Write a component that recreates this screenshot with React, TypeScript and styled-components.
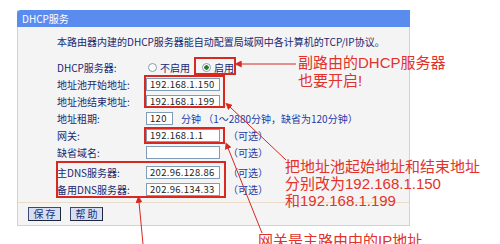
import React from 'react';
import styled, { createGlobalStyle } from 'styled-components';

const GlobalStyle = createGlobalStyle`
  html, body {
    margin: 0;
    padding: 0;
    background: #ffffff;
  }
  body {
    font-family: "Noto Sans CJK SC", "Noto Sans", sans-serif;
  }
`;

interface Field {
  label: string;
  value?: string;
  width?: number;
  suffix?: string;
}

const poolFields: Field[] = [
  { label: '地址池开始地址:', value: '192.168.1.150' },
  { label: '地址池结束地址:', value: '192.168.1.199' },
];

const midFields: Field[] = [
  { label: '地址租期:', value: '120', width: 27, suffix: '分钟 （1～2880分钟，缺省为120分钟）' },
  { label: '网关:', value: '192.168.1.1', suffix: '（可选）' },
  { label: '缺省域名:', value: '', suffix: '（可选）' },
];

const dnsFields: Field[] = [
  { label: '主DNS服务器:', value: '202.96.128.86', suffix: '（可选）' },
  { label: '备用DNS服务器:', value: '202.96.134.33', suffix: '（可选）' },
];

const renderRow = (f: Field) => (
  <Row key={f.label}>
    <Label>{f.label}</Label>
    <Cell>
      <TextBox style={f.width ? { width: f.width } : undefined}>{f.value}</TextBox>
      {f.suffix && <Hint>{f.suffix}</Hint>}
    </Cell>
  </Row>
);

const App: React.FC = () => {
  return (
    <>
      <GlobalStyle />
      <Page>
        <Panel>
          <TitleBar>DHCP服务</TitleBar>
          <Body>
            <Intro>本路由器内建的DHCP服务器能自动配置局域网中各计算机的TCP/IP协议。</Intro>
            <Form>
              <Row>
                <Label>DHCP服务器:</Label>
                <Cell>
                  <Radio>
                    <Dot />
                    不启用
                  </Radio>
                  <Radio>
                    <Dot checked />
                    启用
                  </Radio>
                </Cell>
              </Row>
              {poolFields.map(renderRow)}
              {midFields.map(renderRow)}
              <DnsGroup>{dnsFields.map(renderRow)}</DnsGroup>
            </Form>
          </Body>
          <Footer>
            <Button>保 存</Button>
            <Button>帮 助</Button>
          </Footer>
        </Panel>

        <Marks width="500" height="244" viewBox="0 0 500 244">
          <defs>
            <marker id="tip" viewBox="0 0 10 10" refX="1" refY="5" markerWidth="7" markerHeight="7" orient="auto-start-reverse">
              <path d="M0 0 L10 5 L0 10 z" fill="#d8281f" />
            </marker>
          </defs>
          <g fill="none" stroke="#d8281f" strokeWidth="2">
            <rect x="195" y="58" width="40" height="16" />
            <rect x="145" y="76" width="79" height="31" />
            <rect x="145" y="128" width="79" height="15" />
            <rect x="57" y="162" width="168" height="35" />
          </g>
          <g fill="none" stroke="#d8281f" strokeWidth="1">
            <line x1="296" y1="64" x2="241" y2="64" markerEnd="url(#tip)" />
            <line x1="286" y1="160" x2="230" y2="107" markerEnd="url(#tip)" />
            <line x1="262" y1="233" x2="228" y2="148" markerEnd="url(#tip)" />
            <line x1="143" y1="244" x2="139" y2="202" markerEnd="url(#tip)" />
          </g>
        </Marks>

        <Note style={{ left: 298, top: 54 }}>
          <NoteLine gap={18}>副路由的DHCP服务器</NoteLine>
          <NoteLine gap={18}>也要开启!</NoteLine>
        </Note>
        <Note style={{ left: 285, top: 158 }}>
          <NoteLine gap={17}>把地址池起始地址和结束地址</NoteLine>
          <NoteLine gap={17}>分别改为192.168.1.150</NoteLine>
          <NoteLine gap={17}>和192.168.1.199</NoteLine>
        </Note>
        <Note style={{ left: 258, top: 232 }}>
          <NoteLine gap={18}>网关是主路由中的IP地址</NoteLine>
        </Note>
      </Page>
    </>
  );
};

const Page = styled.div`
  position: relative;
  width: 500px;
  height: 244px;
  overflow: hidden;
  padding: 10px 0 0 17px;
  box-sizing: border-box;
  background: #ffffff;
`;

const Panel = styled.div`
  width: 393px;
  height: 216px;
  box-sizing: border-box;
  background: #f4f4f4;
  border: 1px solid #f2cc9c;
  border-top: none;
  display: flex;
  flex-direction: column;
`;

const TitleBar = styled.div`
  height: 17px;
  margin: 0 -1px;
  padding-left: 5px;
  background: #5a8cf0;
  border-top-left-radius: 4px;
  color: #ffffff;
  font-size: 10px;
  line-height: 17px;
`;

const Body = styled.div`
  padding: 9px 0 0 39px;
  color: #1a2870;
  font-size: 10px;
`;

const Intro = styled.div`
  height: 12px;
  line-height: 12px;
  white-space: nowrap;
`;

const Form = styled.div`
  margin-top: 11px;
  display: flex;
  flex-direction: column;
`;

const Row = styled.div`
  display: grid;
  grid-template-columns: 89px auto;
  align-items: center;
  height: 17px;
`;

const DnsGroup = styled.div`
  padding-top: 3px;
`;

const Label = styled.span`
  white-space: nowrap;
  line-height: 12px;
`;

const Cell = styled.div`
  display: flex;
  align-items: center;
  white-space: nowrap;
`;

const TextBox = styled.div`
  width: 74px;
  height: 13px;
  box-sizing: border-box;
  background: #ffffff;
  border: 1px solid #7f9db9;
  padding-left: 3px;
  color: #222222;
  font-size: 9.5px;
  line-height: 11px;
  letter-spacing: 0.3px;
`;

const Hint = styled.span`
  margin-left: 8px;
  color: #1f3aa8;
  line-height: 12px;
`;

const Radio = styled.span`
  display: inline-flex;
  align-items: center;
  gap: 3px;
  margin-left: 2px;
  margin-right: 10px;
`;

const Dot = styled.span<{ checked?: boolean }>`
  width: 9px;
  height: 9px;
  box-sizing: border-box;
  border-radius: 50%;
  border: 1px solid #8a9ab0;
  background: ${(p) => (p.checked ? 'radial-gradient(circle, #2a7a2a 0 2px, #ffffff 2.5px)' : '#ffffff')};
`;

const Footer = styled.div`
  margin-top: auto;
  height: 22px;
  border-top: 1px solid #eadcc8;
  display: flex;
  align-items: center;
  gap: 9px;
  padding-left: 10px;
`;

const Button = styled.div`
  width: 33px;
  height: 14px;
  box-sizing: border-box;
  background: #d6dff0;
  border: 1px solid #3c4a70;
  border-right-color: #1e2540;
  border-bottom-color: #1e2540;
  color: #1d2d78;
  font-size: 10px;
  line-height: 12px;
  text-align: center;
`;

const Marks = styled.svg`
  position: absolute;
  left: 0;
  top: 0;
  pointer-events: none;
`;

const Note = styled.div`
  position: absolute;
  display: flex;
  flex-direction: column;
  color: #e2322b;
  font-family: "Liberation Sans", "Noto Sans CJK SC", sans-serif;
  font-size: 15px;
  white-space: nowrap;
`;

const NoteLine = styled.div<{ gap: number }>`
  height: ${(p) => p.gap}px;
  line-height: ${(p) => p.gap}px;
  overflow: visible;
`;

export default App;
